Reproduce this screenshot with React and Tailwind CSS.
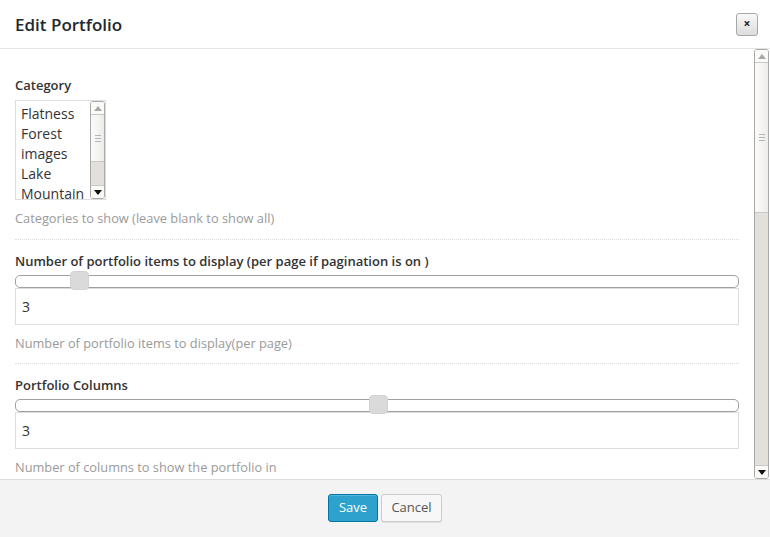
import React from "react";

function UpTri({ color }) {
  return (
    <svg width="8" height="5" viewBox="0 0 8 5">
      <polygon points="0,5 8,5 4,0" fill={color} />
    </svg>
  );
}
function DownTri({ color }) {
  return (
    <svg width="8" height="5" viewBox="0 0 8 5">
      <polygon points="0,0 8,0 4,5" fill={color} />
    </svg>
  );
}

function Grip() {
  return (
    <div className="flex flex-col gap-[2px]">
      <div className="w-[6px] h-px bg-[#b5b5b5]" />
      <div className="w-[6px] h-px bg-[#b5b5b5]" />
      <div className="w-[6px] h-px bg-[#b5b5b5]" />
    </div>
  );
}

function Scrollbar({ thumbH, className }) {
  return (
    <div className={"flex flex-col border border-[#a9a9a9] rounded-[3px] overflow-hidden " + className}>
      <div className="h-[13px] shrink-0 bg-[#fcfaf7] border-b border-[#c8c8c8] flex items-center justify-center">
        <UpTri color="#a8a8a8" />
      </div>
      <div
        className="shrink-0 bg-gradient-to-r from-[#fbfaf8] via-[#f7f5f2] to-[#ebebeb] border-b border-[#c8c8c8] flex items-center justify-center"
        style={{ height: thumbH }}
      >
        <Grip />
      </div>
      <div className="flex-1 bg-[#e3dfda]" />
      <div className="h-[13px] shrink-0 bg-[#fcfaf7] border-t border-[#c8c8c8] flex items-center justify-center">
        <DownTri color="#111" />
      </div>
    </div>
  );
}

function Slider({ left }) {
  return (
    <div className="relative h-[13px] mt-[4px]">
      <div className="h-[13px] border border-[#a0a0a0] rounded-[5px] bg-white" />
      <div
        className="absolute top-[-4px] w-[19px] h-[19px] rounded-[4px] bg-[#dadada] border border-[#d2d2d2]"
        style={{ left }}
      />
    </div>
  );
}

function NumInput() {
  return (
    <div className="h-[37px] border border-[#dddddd] flex items-center px-[6px] text-[14px] text-[#333]">
      3
    </div>
  );
}

export default function App() {
  return (
    <div
      className="w-[770px] h-[537px] bg-white flex flex-col overflow-hidden"
      style={{ fontFamily: "'Open Sans', 'Noto Sans', sans-serif" }}
    >
      <div className="h-[49px] shrink-0 border-b border-[#e5e5e5] flex items-center justify-between pl-[15px] pr-[12px]">
        <div className="text-[17px] font-semibold text-[#23282d] leading-none">Edit Portfolio</div>
        <div className="w-[22px] h-[23px] border border-[#a8a8a8] rounded-[3px] bg-gradient-to-b from-[#f8f8f8] to-[#dcdcdc] flex items-center justify-center text-[12px] text-[#222] leading-none font-bold">
          ×
        </div>
      </div>

      <div className="h-[430px] shrink-0 flex">
        <div className="flex-1 overflow-hidden pl-[15px] pr-[15px] pt-[26px] text-[13px]">
          <div className="h-[20px] leading-[20px] font-semibold text-[#333]">Category</div>
          <div className="mt-[5px] w-[91px] h-[100px] border border-[#dddddd] flex overflow-hidden">
            <div className="flex-1 pl-[5px] pt-[3px] text-[14px] leading-[20px] text-[#333] overflow-hidden whitespace-nowrap">
              <div>Flatness</div>
              <div>Forest</div>
              <div>images</div>
              <div>Lake</div>
              <div>Mountain</div>
            </div>
            <Scrollbar thumbH={47} className="w-[15px] h-[98px]" />
          </div>
          <div className="mt-[8px] h-[20px] leading-[20px] text-[12.8px] text-[#9a9a9a]">Categories to show (leave blank to show all)</div>
          <div className="mt-[11px] border-t border-dotted border-[#dcdcdc]" />

          <div className="mt-[11px] h-[20px] leading-[20px] font-semibold text-[#333]">
            Number of portfolio items to display (per page if pagination is on )
          </div>
          <Slider left={55} />
          <NumInput />
          <div className="mt-[8px] h-[20px] leading-[20px] text-[12.8px] text-[#9a9a9a]">Number of portfolio items to display(per page)</div>
          <div className="mt-[10px] border-t border-dotted border-[#dcdcdc]" />

          <div className="mt-[11px] h-[20px] leading-[20px] font-semibold text-[#333]">Portfolio Columns</div>
          <Slider left={354} />
          <NumInput />
          <div className="mt-[8px] h-[20px] leading-[20px] text-[12.8px] text-[#9a9a9a]">Number of columns to show the portfolio in</div>
        </div>
        <Scrollbar thumbH={150} className="w-[15px] h-[430px] mr-[1px]" />
      </div>

      <div className="flex-1 bg-[#f3f3f3] border-t border-[#dddddd] flex items-start justify-center gap-[3px] pt-[14px]">
        <div className="w-[50px] h-[28px] rounded-[3px] bg-[#2ea2cc] border border-[#0074a2] text-white text-[13px] flex items-center justify-center shadow-[inset_0_1px_0_rgba(120,200,230,0.5)]">
          Save
        </div>
        <div className="w-[61px] h-[28px] rounded-[3px] bg-[#f7f7f7] border border-[#cccccc] text-[#555] text-[13px] flex items-center justify-center shadow-[0_1px_0_rgba(0,0,0,0.08)]">
          Cancel
        </div>
      </div>
    </div>
  );
}
